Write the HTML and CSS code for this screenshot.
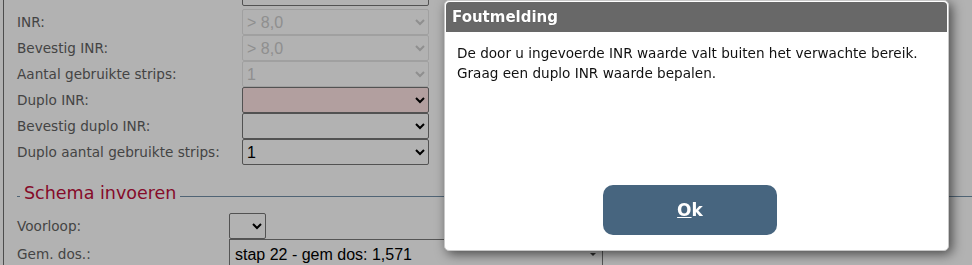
FILE: index.html
```html
<!DOCTYPE html>
<html lang="nl">
<head>
<meta charset="utf-8">
<title>Foutmelding</title>
<link rel="stylesheet" href="styles.css">
</head>
<body>
<div class="page">
  <div class="form">
    <div class="row first"><span class="label"></span><select class="sel"><option></option></select></div>
    <div class="row"><span class="label">INR:</span><select class="sel" disabled><option>&gt; 8,0</option></select></div>
    <div class="row"><span class="label">Bevestig INR:</span><select class="sel" disabled><option>&gt; 8,0</option></select></div>
    <div class="row"><span class="label">Aantal gebruikte strips:</span><select class="sel" disabled><option>1</option></select></div>
    <div class="row"><span class="label">Duplo INR:</span><select class="sel invalid"><option></option></select></div>
    <div class="row"><span class="label">Bevestig duplo INR:</span><select class="sel"><option></option></select></div>
    <div class="row"><span class="label">Duplo aantal gebruikte strips:</span><select class="sel"><option>1</option></select></div>
  </div>
  <div class="section">
    <div class="legend">Schema invoeren</div>
    <div class="form schema">
      <div class="row"><span class="label">Voorloop:</span><select class="sel small"><option></option></select></div>
      <div class="row"><span class="label">Gem. dos.:</span><div class="wide-wrap"><select class="sel wide"><option>stap 22 - gem dos: 1,571</option></select></div></div>
    </div>
  </div>
</div>
<div class="overlay"></div>
<div class="dialog" role="alertdialog">
  <div class="dialog-title">Foutmelding</div>
  <div class="dialog-body">De door u ingevoerde INR waarde valt buiten het verwachte bereik.<br>Graag een duplo INR waarde bepalen.</div>
  <div class="dialog-actions"><button class="btn"><u>O</u>k</button></div>
</div>
</body>
</html>
```
FILE: styles.css
```css
html, body {
  margin: 0;
  padding: 0;
  background: #fff;
  overflow: hidden;
  height: 100%;
}
body {
  font-family: "DejaVu Sans", Tahoma, sans-serif;
}
.page {
  margin-left: 3px;
  border-left: 1px solid #6f6f6f;
  min-height: 100vh;
  padding-left: 13px;
}
.form {
  display: flex;
  flex-direction: column;
  margin-top: -18px;
}
.row {
  display: grid;
  grid-template-columns: 225px auto;
  justify-content: start;
  height: 26px;
  align-items: center;
}
.row.first {
  height: 24px;
  margin-bottom: 3px;
}
.label {
  font-size: 13.6px;
  color: #626262;
}
.sel {
  font-family: "Liberation Sans", Arial, sans-serif;
  font-size: 16px;
  width: 187px;
  height: 26px;
  margin: 0;
  box-sizing: border-box;
  color: #000;
  background-color: #fff;
  border: 1px solid #767676;
  border-radius: 2px;
}
.row.first .sel {
  height: 24px;
}
.sel:disabled {
  color: #b8b8b8;
  border-color: #dcdcdc;
}
.sel.invalid {
  background-color: #ffe4e4;
}
.section {
  margin-top: 16px;
}
.legend {
  display: flex;
  align-items: center;
  height: 24px;
  font-size: 17.5px;
  color: #c0103c;
}
.legend::before,
.legend::after {
  content: "";
  height: 1px;
  background: #7390a8;
  margin-top: 6px;
}
.legend::before {
  width: 3px;
  margin-right: 4px;
}
.legend::after {
  flex: 1;
  margin-left: 4px;
}
.form.schema {
  margin-top: 8px;
}
.form.schema .row {
  grid-template-columns: 212px auto;
}
.sel.small {
  width: 37px;
}
.wide-wrap {
  position: relative;
  align-self: start;
  justify-self: start;
  width: 374px;
}
.sel.wide {
  width: 374px;
  height: 30px;
  appearance: none;
  -webkit-appearance: none;
  padding-left: 5px;
  border-radius: 0;
  border-color: #7a7a7a;
}
.wide-wrap::after {
  content: "";
  position: absolute;
  right: 7px;
  top: 14px;
  border-left: 3px solid transparent;
  border-right: 3px solid transparent;
  border-top: 3px solid #444;
}
.overlay {
  position: fixed;
  inset: 0;
  background: rgba(0, 0, 0, 0.3);
}
.dialog {
  position: absolute;
  left: 444px;
  top: 0;
  width: 505px;
  height: 251px;
  box-sizing: border-box;
  background: #fff;
  border: 1px solid #c8c8c8;
  border-radius: 5px;
  padding: 1px;
  display: flex;
  flex-direction: column;
  box-shadow: 3px 3px 12px rgba(0, 0, 0, 0.6);
}
.dialog-title {
  height: 30px;
  line-height: 30px;
  background: #686868;
  color: #fff;
  font-weight: bold;
  font-size: 15px;
  padding-left: 6px;
  border-radius: 4px 4px 0 0;
  text-shadow: 0 0 1px rgba(0, 0, 0, 0.4);
}
.dialog-body {
  flex: 1;
  padding: 11px 11px 0;
  font-size: 13.6px;
  line-height: 20px;
  color: #111;
}
.dialog-actions {
  padding: 0 0 14px 157px;
}
.btn {
  width: 174px;
  height: 50px;
  border: none;
  border-radius: 10px;
  background: #47657f;
  color: #fff;
  font-family: "DejaVu Sans", Tahoma, sans-serif;
  font-weight: bold;
  font-size: 17px;
  cursor: pointer;
}
```
